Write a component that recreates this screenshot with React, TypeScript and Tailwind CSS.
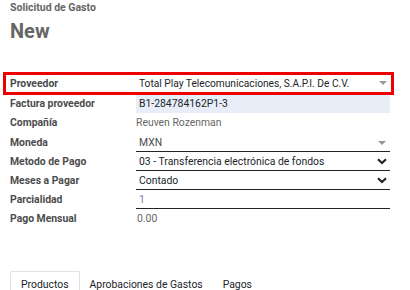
const font = { fontFamily: "Roboto, 'Liberation Sans', sans-serif" };

function Caret() {
  return (
    <svg width="8" height="4" viewBox="0 0 8 4" className="mr-[4px]">
      <path d="M0 0 L8 0 L4 4 Z" fill="#999999" />
    </svg>
  );
}

function Chevron() {
  return (
    <svg width="10" height="7" viewBox="0 0 10 7" className="mr-[3px]">
      <path d="M1 1.2 L5 5 L9 1.2" fill="none" stroke="#212529" strokeWidth="2.2" />
    </svg>
  );
}

function Label({ children }: { children: React.ReactNode }) {
  return (
    <div className="w-[136px] shrink-0 pl-[10px] text-[10.4px] font-bold text-[#4c4c4c]">
      {children}
    </div>
  );
}

export default function App() {
  return (
    <div className="h-[290px] w-[410px] overflow-hidden bg-white" style={font}>
      <div className="px-[10px]">
        <div className="h-[15px] text-[10.5px] font-bold leading-[15px] text-[#666666]">
          Solicitud de Gasto
        </div>
        <div className="mt-[6px] text-[20px] font-bold leading-[20px] text-[#666666]">
          New
        </div>
      </div>

      <div className="mt-[31px] w-[394px]">
        <div className="ml-[3px] flex h-[23px] items-center border-[3px] border-[#ee0000]">
          <div className="w-[133px] shrink-0 pl-[4px] text-[10.4px] font-bold text-[#4c4c4c]">
            Proveedor
          </div>
          <div className="flex flex-1 items-center justify-between text-[10.2px] text-[#212529]">
            <span>Total Play Telecomunicaciones, S.A.P.I. De C.V.</span>
            <Caret />
          </div>
        </div>

        <div className="flex h-[18px] items-center">
          <Label>Factura proveedor</Label>
          <div className="flex h-full w-[254px] items-center bg-[#e8eef8] pl-[3px] text-[10.4px] text-[#212529]">
            B1-284784162P1-3
          </div>
        </div>

        <div className="flex h-[20px] items-center">
          <Label>Compañía</Label>
          <div className="text-[10.4px] text-[#666666]">Reuven Rozenman</div>
        </div>

        <div className="flex h-[19px] items-center">
          <Label>Moneda</Label>
          <div className="flex h-full w-[254px] items-center justify-between border-b border-[#212529] pl-[3px] pt-[1px] text-[10.4px] text-[#4c4c4c]">
            <span>MXN</span>
            <Caret />
          </div>
        </div>

        <div className="flex h-[19px] items-center">
          <Label>Metodo de Pago</Label>
          <div className="flex h-full w-[254px] items-center justify-between border-b border-[#212529] pl-[3px] pt-[1px] text-[10.4px] text-[#212529]">
            <span>03 - Transferencia electrónica de fondos</span>
            <Chevron />
          </div>
        </div>

        <div className="flex h-[19px] items-center">
          <Label>Meses a Pagar</Label>
          <div className="flex h-full w-[254px] items-center justify-between border-b border-[#212529] pl-[3px] pt-[1px] text-[10.4px] text-[#212529]">
            <span>Contado</span>
            <Chevron />
          </div>
        </div>

        <div className="flex h-[19px] items-center">
          <Label>Parcialidad</Label>
          <div className="flex h-full w-[254px] items-center border-b border-[#212529] pl-[3px] pt-[1px] text-[10.4px] text-[#7c7bad]">
            1
          </div>
        </div>

        <div className="flex h-[19px] items-center">
          <Label>Pago Mensual</Label>
          <div className="pl-[1px] text-[10.4px] text-[#666666]">0.00</div>
        </div>
      </div>

      <div className="mt-[43px] ml-[10px] flex h-[19px] text-[10.4px] leading-[10px] text-[#212529]">
        <div className="rounded-t-[2px] border border-b-0 border-[#dee2e6] px-[10px] pt-[8px]">
          Productos
        </div>
        <div className="px-[10px] pt-[9px]">Aprobaciones de Gastos</div>
        <div className="px-[10px] pt-[9px]">Pagos</div>
      </div>
    </div>
  );
}
